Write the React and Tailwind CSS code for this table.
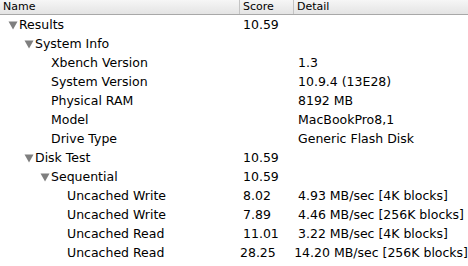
const rows = [
  { level: 0, open: true, name: "Results", score: "10.59", detail: "" },
  { level: 1, open: true, name: "System Info", score: "", detail: "" },
  { level: 2, name: "Xbench Version", score: "", detail: "1.3" },
  { level: 2, name: "System Version", score: "", detail: "10.9.4 (13E28)" },
  { level: 2, name: "Physical RAM", score: "", detail: "8192 MB" },
  { level: 2, name: "Model", score: "", detail: "MacBookPro8,1" },
  { level: 2, name: "Drive Type", score: "", detail: "Generic Flash Disk" },
  { level: 1, open: true, name: "Disk Test", score: "10.59", detail: "" },
  { level: 2, open: true, name: "Sequential", score: "10.59", detail: "" },
  { level: 3, name: "Uncached Write", score: "8.02", detail: "4.93 MB/sec [4K blocks]" },
  { level: 3, name: "Uncached Write", score: "7.89", detail: "4.46 MB/sec [256K blocks]" },
  { level: 3, name: "Uncached Read", score: "11.01", detail: "3.22 MB/sec [4K blocks]" },
  { level: 3, name: "Uncached Read", score: "28.25", detail: "14.20 MB/sec [256K blocks]" },
];

const pads = ["pl-[8px]", "pl-[24px]", "pl-[40px]", "pl-[56px]"];

function Disclosure() {
  return (
    <svg width="10" height="9" viewBox="0 0 10 9" className="shrink-0">
      <path d="M0.5 0.5 L9.5 0.5 L5 8.5 Z" fill="#7f7f7f" />
    </svg>
  );
}

export default function App() {
  return (
    <div
      className="w-[468px] h-[266px] bg-white overflow-hidden text-black"
      style={{ fontFamily: '"DejaVu Sans", "Lucida Grande", sans-serif' }}
    >
      <div className="flex h-[15px] bg-gradient-to-b from-[#f6f6f6] to-[#e4e4e4] border-b border-[#a8a8a8] text-[11px] leading-[14px]">
        <div className="w-[239px] pl-[3px]">Name</div>
        <div className="w-[54px] border-l border-[#c4c4c4] pl-[3px]">Score</div>
        <div className="flex-1 border-l border-[#c4c4c4] pl-[3px]">Detail</div>
      </div>
      <div className="flex flex-col pt-[1px] text-[12.5px]">
        {rows.map((r, i) => (
          <div key={i} className="flex h-[19px] items-center">
            <div className={`w-[240px] flex items-center ${pads[r.level]}`}>
              {r.open ? <Disclosure /> : <span className="w-[10px] shrink-0" />}
              <span className="ml-[1px] whitespace-nowrap">{r.name}</span>
            </div>
            <div className="w-[54px] pl-[3px] whitespace-nowrap">{r.score}</div>
            <div className="flex-1 pl-[4px] whitespace-nowrap">{r.detail}</div>
          </div>
        ))}
      </div>
    </div>
  );
}
